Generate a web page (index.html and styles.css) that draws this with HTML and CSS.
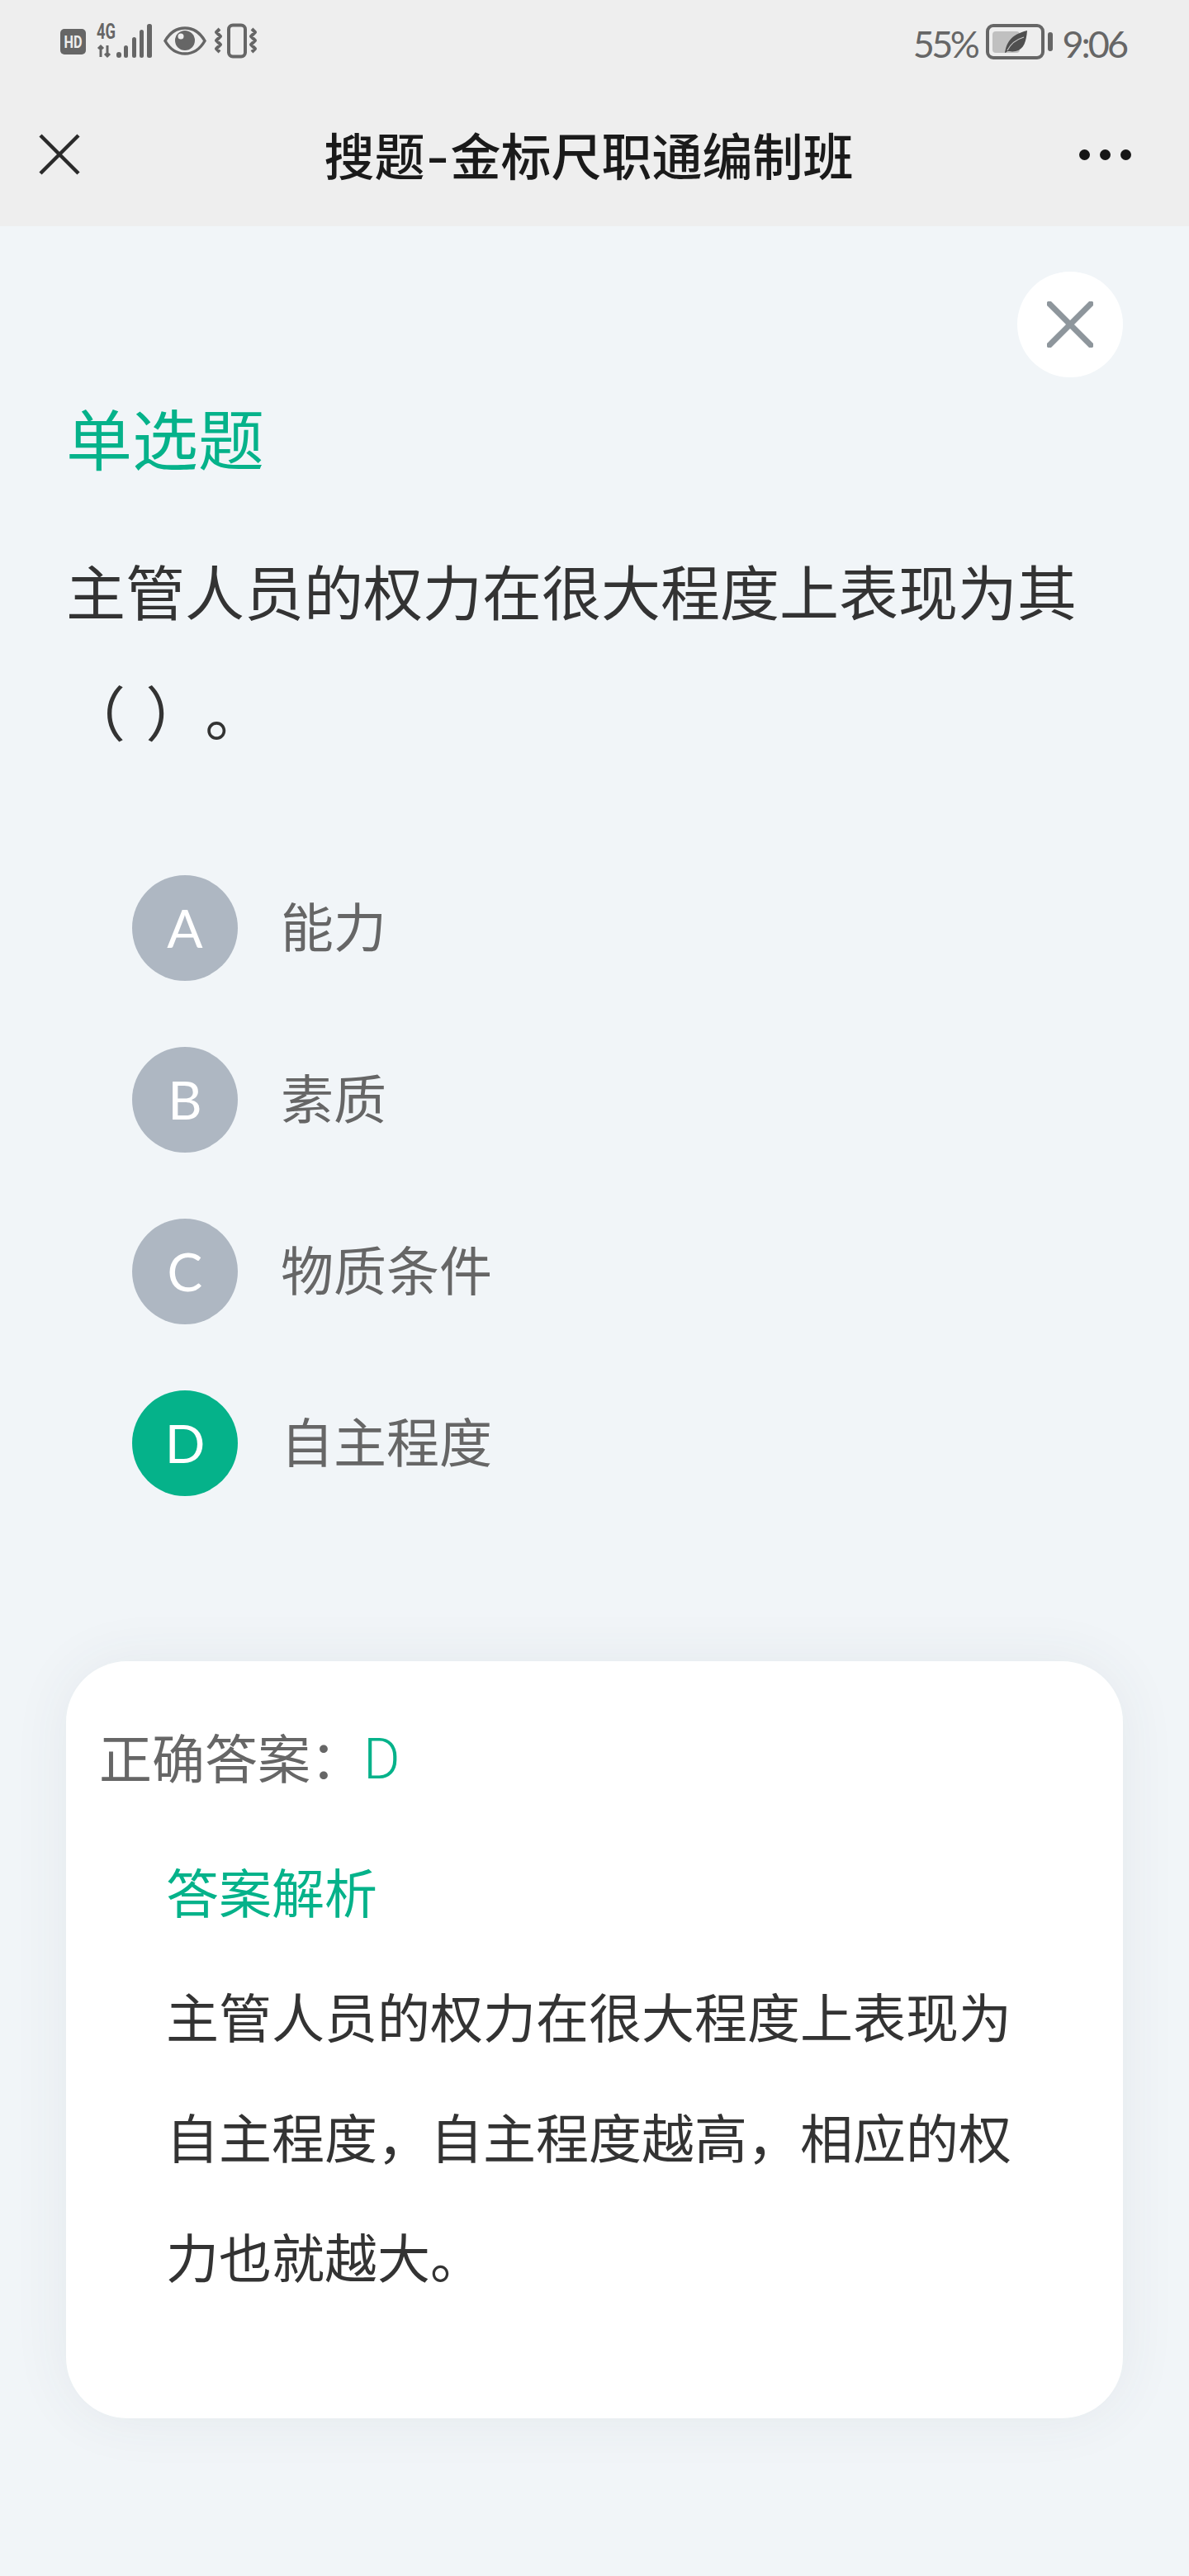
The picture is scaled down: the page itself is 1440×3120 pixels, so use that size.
FILE: index.html
```html
<!DOCTYPE html>
<html lang="zh-CN">
  <head>
    <meta charset="UTF-8" />
    <meta name="viewport" content="width=device-width, initial-scale=1.0" />
    <title>搜题-金标尺职通编制班</title>
    <link rel="stylesheet" href="styles.css">
  </head>
  <body>
    <header class="top-bar">
      <div class="status-bar">
        <svg class="status-left" width="250" height="70" viewBox="0 -16 250 70">
          <rect x="0" y="7" width="31" height="31" rx="5" fill="#666"/>
          <text class="hd-text" x="4.500" y="30" textLength="22" lengthAdjust="spacingAndGlyphs">HD</text>
          <text class="net-text" x="44" y="19" textLength="23" lengthAdjust="spacingAndGlyphs">4G</text>
          <path d="M49 28v13M46 31l3-3 3 3M57 27v13M54 37l3 3 3-3" fill="none" stroke="#666" stroke-width="3"/>
          <rect x="68" y="35" width="6" height="7" rx="3" fill="#666"/>
          <rect x="77" y="27" width="5" height="15" rx="2.5" fill="#666"/>
          <rect x="87" y="17" width="5" height="25" rx="2.5" fill="#666"/>
          <rect x="96" y="8" width="5" height="34" rx="2.5" fill="#666"/>
          <rect x="105" y="1" width="6" height="41" rx="2.5" fill="#666"/>
          <path d="M127 21.500C133 11 142 6 151 6s18 5 24 15.500C169 32 160 37 151 37s-18-5-24-15.500z" fill="none" stroke="#666" stroke-width="3.500"/>
          <circle cx="151" cy="21" r="12" fill="#666"/>
          <circle cx="146" cy="16" r="3.500" fill="#eee"/>
          <rect x="204" y="2.500" width="20" height="38" rx="5" fill="none" stroke="#666" stroke-width="4"/>
          <path d="M193 7l-4 4 5 5-5 5 5 5-5 5 4 4M232 7l4 4-5 5 5 5-5 5 5 5-4 4" fill="none" stroke="#666" stroke-width="4" stroke-linejoin="round"/>
        </svg>
        <div class="status-right">
          <span class="status-text">55%</span>
          <svg class="battery" width="82" height="44" viewBox="0 0 82 44">
            <rect x="2" y="2" width="67" height="39" rx="7" fill="none" stroke="#666" stroke-width="4"/>
            <rect x="8" y="9" width="33" height="26" rx="4" fill="#c0c0c0"/>
            <rect x="75" y="10" width="6" height="23" rx="3" fill="#666"/>
            <path d="M50 8c-1 13-4 23-14 25-4 1-8 0-10 0-2 2-3 2-3 2 2-11 6-22 27-27z" fill="#4f4f4f"/>
            <path d="M26 32c4-8 10-13 20-16" fill="none" stroke="#c8c8c8" stroke-width="1.200"/>
          </svg>
          <span class="status-text time">9:06</span>
        </div>
      </div>
      <nav class="nav-bar">
        <svg class="nav-close" width="50" height="50" viewBox="0 0 50 50">
          <path d="M2 2l46 46M48 2L2 48" fill="none" stroke="#2a2a2a" stroke-width="4.500"/>
        </svg>
        <h1 class="nav-title">搜题<span class="nav-dash">-</span>金标尺职通编制班</h1>
        <div class="nav-more"><i></i><i></i><i></i></div>
      </nav>
    </header>

    <main class="content">
      <div class="close-row">
        <button type="button" class="close-btn">
          <svg width="56" height="56" viewBox="0 0 56 56">
            <path d="M3 3l50 50M53 3L3 53" fill="none" stroke="#8e969c" stroke-width="7" stroke-linecap="round"/>
          </svg>
        </button>
      </div>

      <div class="question-type">单选题</div>
      <p class="question">主管人员的权力在很大程度上表现为其（ ）。</p>

      <ul class="options">
        <li class="option"><span class="letter">A</span><span class="option-text">能力</span></li>
        <li class="option"><span class="letter">B</span><span class="option-text">素质</span></li>
        <li class="option"><span class="letter">C</span><span class="option-text">物质条件</span></li>
        <li class="option correct"><span class="letter">D</span><span class="option-text">自主程度</span></li>
      </ul>

      <section class="answer-card">
        <div class="answer-line">正确答案：<span class="answer-value">D</span></div>
        <div class="analysis">
          <h2 class="analysis-title">答案解析</h2>
          <p class="analysis-text">主管人员的权力在很大程度上表现为自主程度，自主程度越高，相应的权力也就越大。</p>
        </div>
      </section>
    </main>
  </body>
</html>
```

FILE: styles.css
```css
body {
  font-family: "Noto Sans CJK SC", "Noto Sans", sans-serif;
  background-color: #f1f5f8;
  color: #333;
  margin: 0;
  padding: 0;
  min-height: 3120px;
  text-spacing-trim: space-all;
}

.top-bar {
  background-color: #eeeeee;
  height: 274px;
}

.status-bar {
  display: flex;
  justify-content: space-between;
  height: 100px;
  padding: 28px 76px 0 73px;
  box-sizing: border-box;
}

.status-left {
  margin-top: -16px;
}

.status-right {
  display: flex;
  align-items: flex-start;
  color: #666;
}

.status-text {
  font-family: "Lato", sans-serif;
  font-weight: 400;
  font-size: 45px;
  line-height: 50px;
  letter-spacing: -3.5px;
}

.battery {
  margin: 1px 0 0 11px;
}

.time {
  margin-left: 10px;
  letter-spacing: -3px;
}

.hd-text,
.net-text {
  font-family: "Roboto", sans-serif;
  font-weight: 700;
  fill: #eee;
  font-size: 21px;
}

.net-text {
  fill: #666;
  font-size: 26px;
}

.nav-bar {
  display: flex;
  align-items: center;
  justify-content: space-between;
  height: 174px;
  padding: 0 70px 0 47px;
}

.nav-title {
  margin: 0 0 0 22px;
  font-size: 61px;
  line-height: 90px;
  font-weight: 500;
  color: #1a1a1a;
}

.nav-dash {
  margin: 0 2px;
  font-size: 78px;
  font-weight: 400;
  line-height: 1;
  vertical-align: -3px;
}

.nav-more {
  display: flex;
  gap: 12px;
}

.nav-more i {
  width: 13px;
  height: 13px;
  border-radius: 50%;
  background-color: #161616;
}

.content {
  padding: 0 80px;
}

.close-row {
  display: flex;
  justify-content: flex-end;
  padding-top: 55px;
}

.close-btn {
  display: flex;
  align-items: center;
  justify-content: center;
  width: 128px;
  height: 128px;
  padding: 0;
  border: none;
  border-radius: 50%;
  background-color: #fff;
}

.question-type {
  margin-top: 21px;
  font-size: 80px;
  line-height: 100px;
  color: #05b28a;
}

.question {
  margin: 63px 0 0;
  font-size: 72px;
  line-height: 146px;
  word-spacing: 8px;
  color: #333;
}

.options {
  list-style: none;
  margin: 127px 0 0;
  padding: 0 0 0 80px;
  display: flex;
  flex-direction: column;
  gap: 80px;
}

.option {
  display: flex;
  align-items: center;
  gap: 52px;
}

.letter {
  display: flex;
  align-items: center;
  justify-content: center;
  width: 128px;
  height: 128px;
  padding-bottom: 2px;
  box-sizing: border-box;
  border-radius: 50%;
  background-color: #aeb7c2;
  color: #fff;
  font-family: "Lato", sans-serif;
  font-weight: 400;
  font-size: 64px;
}

.correct .letter {
  background-color: #05b28a;
}

.option-text {
  padding-bottom: 10px;
  font-size: 64px;
  color: #666;
}

.answer-card {
  margin-top: 200px;
  padding: 69px 100px 124px 40px;
  background-color: #fff;
  border-radius: 74px;
  box-shadow: 0 0 70px rgba(50, 70, 90, 0.07);
}

.answer-line {
  font-size: 64px;
  line-height: 90px;
  color: #666;
}

.answer-value {
  font-family: "Roboto", sans-serif;
  font-weight: 300;
  font-size: 68px;
  line-height: 1;
  color: #05b28a;
}

.analysis {
  margin-top: 73px;
  padding-left: 81px;
}

.analysis-title {
  margin: 0;
  font-size: 64px;
  font-weight: 400;
  line-height: 90px;
  color: #05b28a;
}

.analysis-text {
  margin: 34px 0 0;
  font-size: 64px;
  line-height: 145.6px;
  color: #333;
}
```
